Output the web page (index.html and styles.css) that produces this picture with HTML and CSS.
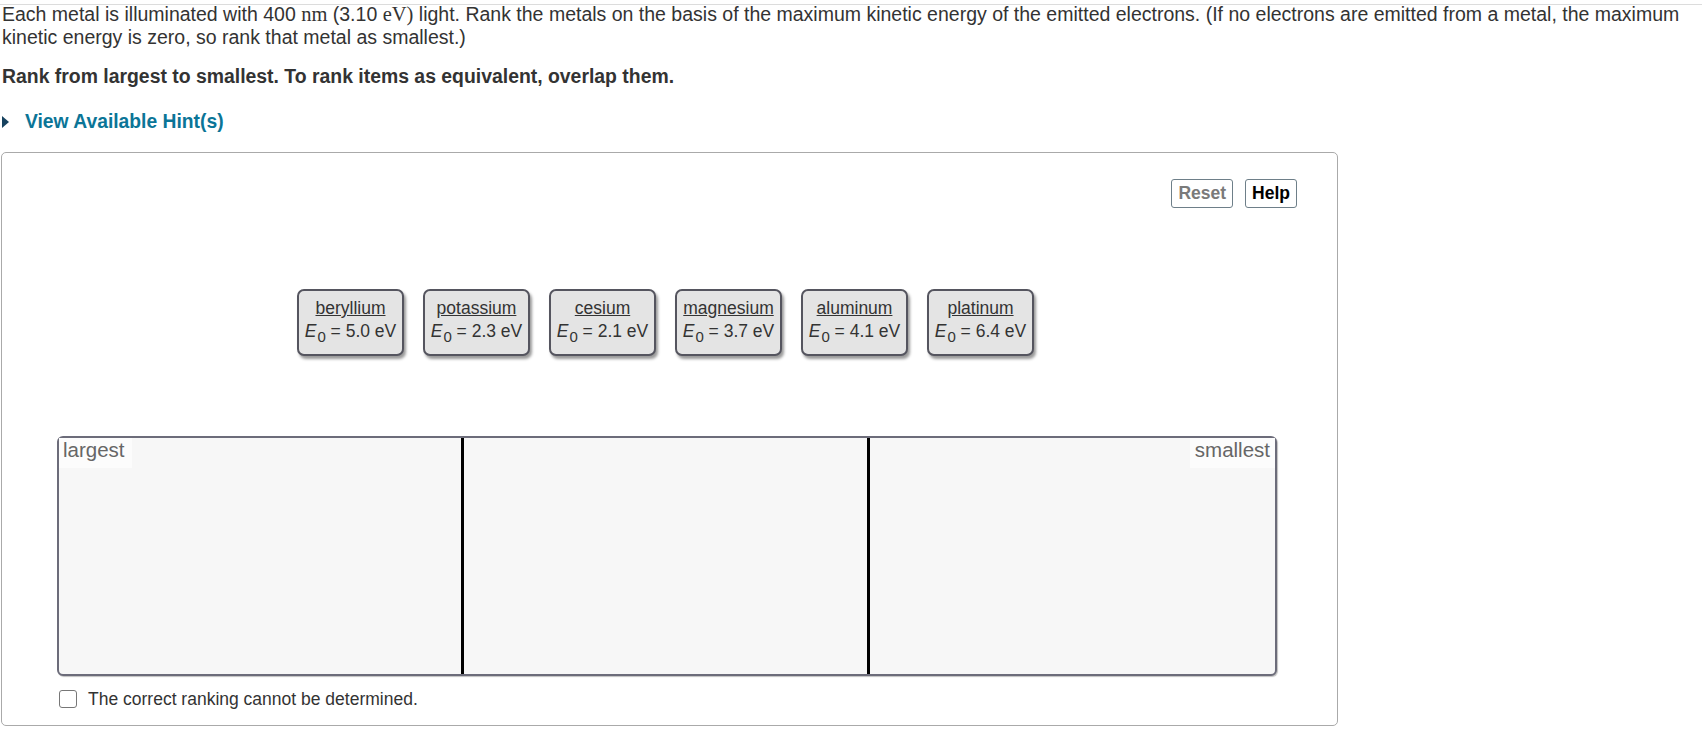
FILE: index.html
```html
<!DOCTYPE html>
<html lang="en">
<head>
<meta charset="utf-8">
<title>Rank metals</title>
<link rel="stylesheet" href="styles.css">
</head>
<body>
<div class="rule"></div>
<p class="prompt">Each metal is illuminated with 400 <span class="math">nm</span> (3.10 <span class="math">eV)</span> light. Rank the metals on the basis of the maximum kinetic energy of the emitted electrons. (If no electrons are emitted from a metal, the maximum kinetic energy is zero, so rank that metal as smallest.)</p>
<p class="instr">Rank from largest to smallest. To rank items as equivalent, overlap them.</p>
<div class="hint"><span class="tri"></span><span class="hint-text">View Available Hint(s)</span></div>
<div class="panel">
  <div class="toolbar">
    <button class="btn btn-reset">Reset</button>
    <button class="btn btn-help">Help</button>
  </div>
  <div class="cards">
    <div class="card"><div class="name">beryllium</div><div class="val"><i>E</i><sub>0</sub> = 5.0 eV</div></div>
    <div class="card"><div class="name">potassium</div><div class="val"><i>E</i><sub>0</sub> = 2.3 eV</div></div>
    <div class="card"><div class="name">cesium</div><div class="val"><i>E</i><sub>0</sub> = 2.1 eV</div></div>
    <div class="card"><div class="name">magnesium</div><div class="val"><i>E</i><sub>0</sub> = 3.7 eV</div></div>
    <div class="card"><div class="name">aluminum</div><div class="val"><i>E</i><sub>0</sub> = 4.1 eV</div></div>
    <div class="card"><div class="name">platinum</div><div class="val"><i>E</i><sub>0</sub> = 6.4 eV</div></div>
  </div>
  <div class="rank">
    <div class="col col-first"><span class="label">largest</span></div>
    <div class="col col-mid"></div>
    <div class="col col-last"><span class="label">smallest</span></div>
  </div>
  <label class="check"><span class="box"></span><span class="check-text">The correct ranking cannot be determined.</span></label>
</div>
</body>
</html>
```
FILE: styles.css
```css
* { box-sizing: border-box; }
body {
  margin: 0;
  font-family: "Liberation Sans", Arial, sans-serif;
  color: #333;
  background: #fff;
}
.rule {
  margin-top: 4px;
  border-top: 1px solid #dcdcdc;
}
.prompt {
  margin: -2px 0 0 0;
  padding-left: 2px;
  font-size: 19.5px;
  line-height: 23px;
}
.math {
  font-family: "Liberation Serif", "DejaVu Serif", serif;
  font-size: 20.5px;
}
.instr {
  margin: 16px 0 0 0;
  padding-left: 2px;
  font-size: 19.4px;
  font-weight: bold;
  line-height: 23px;
  color: #333;
}
.hint {
  margin-top: 22px;
  display: flex;
  align-items: center;
  height: 23px;
  padding-left: 2px;
}
.tri {
  width: 0;
  height: 0;
  border-top: 6px solid transparent;
  border-bottom: 6px solid transparent;
  border-left: 7px solid #17425f;
}
.hint-text {
  margin-left: 16px;
  font-size: 19.3px;
  font-weight: bold;
  color: #0b7597;
}
.panel {
  margin: 19px 0 0 1px;
  width: 1337px;
  border: 1px solid #aaa;
  border-radius: 5px;
  padding: 0 60px 17px 55px;
}
.toolbar {
  display: flex;
  justify-content: flex-end;
  gap: 12px;
  padding-top: 26px;
  margin-right: -20px;
}
.btn {
  height: 29px;
  padding: 0 6px;
  border: 1px solid #6e7f89;
  border-radius: 3px;
  background: #fff;
  font-family: "Liberation Sans", Arial, sans-serif;
  font-size: 17.5px;
  font-weight: bold;
  line-height: 27px;
}
.btn-reset { color: #7a7a7a; }
.btn-help { color: #000; }
.cards {
  margin-top: 81px;
  display: flex;
  justify-content: center;
  gap: 19px;
  padding-right: 3px;
}
.card {
  width: 107px;
  height: 67px;
  border: 2px solid #55555f;
  border-radius: 7px;
  background: #e4e4e4;
  box-shadow: 2px 3px 3px rgba(0, 0, 0, 0.4);
  padding-top: 6px;
  text-align: center;
  font-size: 17.5px;
  line-height: 23px;
  color: #333;
}
.name { text-decoration: underline; }
.val sub {
  font-size: 15px;
  line-height: 0;
  vertical-align: -5px;
  margin-left: 1px;
}
.rank {
  margin-top: 80px;
  height: 240px;
  border: 2px solid #6c6c7a;
  border-radius: 6px;
  background: #f7f7f7;
  box-shadow: 1px 1px 1px rgba(0, 0, 0, 0.25);
  display: grid;
  grid-template-columns: 1fr 1fr 1fr;
}
.col {
  display: flex;
  align-items: flex-start;
}
.col-first, .col-mid { border-right: 3px solid #000; }
.col-last { justify-content: flex-end; }
.label {
  background: #fcfcfc;
  color: #666;
  font-size: 20.5px;
  line-height: 24px;
  padding: 0 7px 6px 4px;
}
.col-last .label { padding: 0 5px 6px 5px; }
.check {
  margin-top: 14px;
  display: flex;
  align-items: center;
  height: 18px;
}
.box {
  margin-left: 2px;
  width: 18px;
  height: 18px;
  border: 1.5px solid #777;
  border-radius: 3px;
  background: #fff;
}
.check-text {
  margin-left: 11px;
  font-size: 17.5px;
  line-height: 18px;
  color: #333;
}
```
